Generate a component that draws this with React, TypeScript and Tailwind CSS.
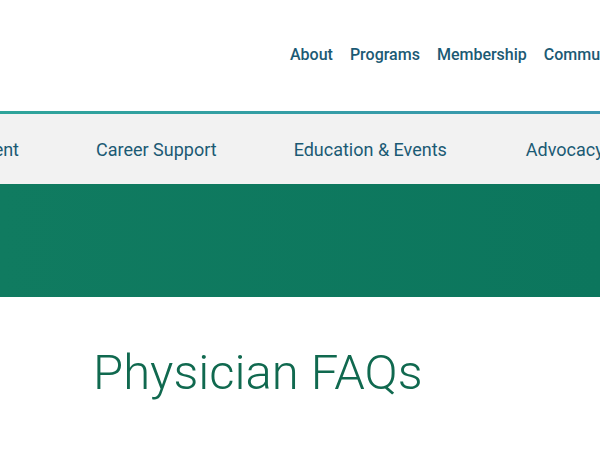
import React from "react";

export default function App() {
  const font = { fontFamily: "Roboto, 'Noto Sans', sans-serif" };
  return (
    <div className="w-[600px] h-[450px] overflow-hidden bg-white" style={font}>
      {/* top utility nav */}
      <div className="h-[111px] flex items-start overflow-hidden">
        <nav className="flex gap-[17px] pl-[290px] pt-[43px] whitespace-nowrap text-[16px] font-medium text-[#1b5a74]">
          <span>About</span>
          <span>Programs</span>
          <span>Membership</span>
          <span>Community</span>
        </nav>
      </div>
      {/* gradient rule */}
      <div className="h-[3px] bg-gradient-to-r from-[#2ea49a] to-[#3b97b1]" />
      {/* main nav */}
      <div className="h-[70px] bg-[#f2f2f2] flex items-center overflow-hidden">
        <nav className="flex items-center gap-[77px] whitespace-nowrap text-[18px] text-[#1b5a74] pt-[1px]">
          <span className="w-[220px] ml-[-201px] text-right shrink-0">Practice Management</span>
          <span className="shrink-0">Career Support</span>
          <span className="shrink-0 pr-[2px]">Education &amp; Events</span>
          <span className="shrink-0">Advocacy</span>
        </nav>
      </div>
      {/* hero band */}
      <div className="h-[113px] bg-gradient-to-r from-[#107b60] to-[#0c765d]" />
      {/* heading */}
      <div className="pl-[93px] pt-[51px]">
        <h1 className="text-[49px] font-light leading-none text-[#10694f] whitespace-nowrap">Physician FAQs</h1>
      </div>
    </div>
  );
}
